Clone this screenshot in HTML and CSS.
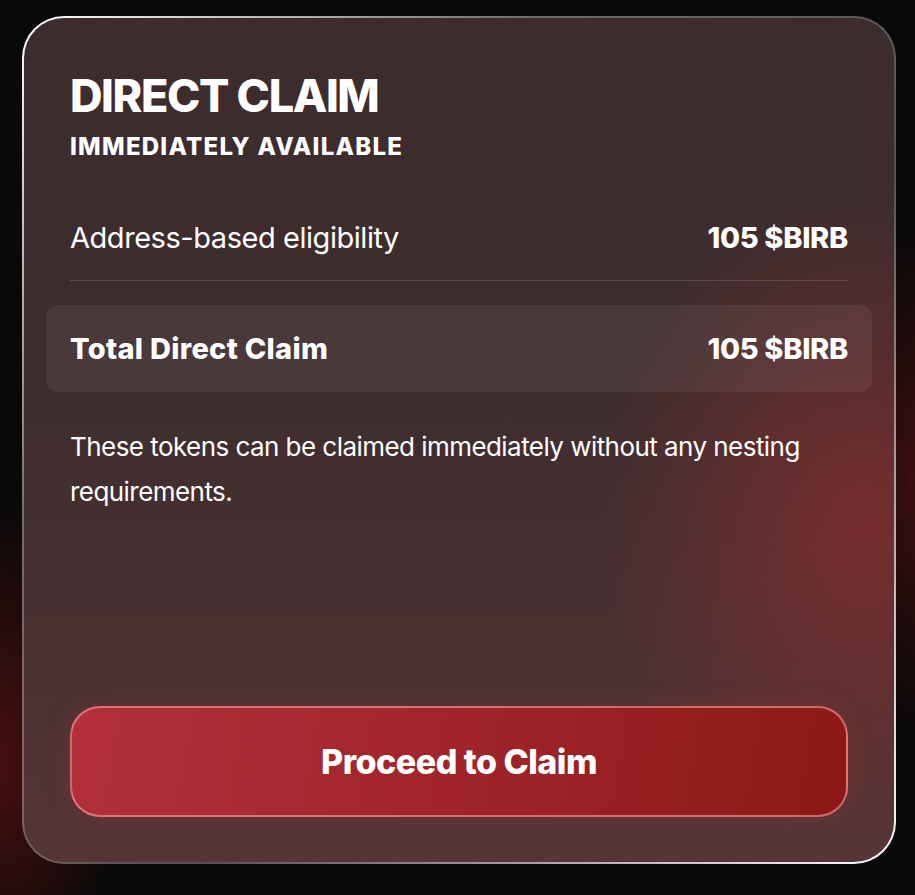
FILE: index.html
```html
<!DOCTYPE html>
<html>
<head>
<meta charset="utf-8">
<link rel="stylesheet" href="styles.css">
</head>
<body>
<div class="card">
  <h1 class="title">DIRECT CLAIM</h1>
  <div class="subtitle">IMMEDIATELY AVAILABLE</div>
  <div class="row">
    <span class="label">Address-based eligibility</span>
    <span class="value">105 $BIRB</span>
  </div>
  <div class="total">
    <span class="total-label">Total Direct Claim</span>
    <span class="value">105 $BIRB</span>
  </div>
  <p class="note">These tokens can be claimed immediately without any nesting requirements.</p>
  <button class="cta">Proceed to Claim</button>
</div>
</body>
</html>
```
FILE: styles.css
```css
html, body {
  margin: 0;
  height: 100%;
}
body {
  background:
    radial-gradient(ellipse 120px 260px at 0px 760px, rgba(120, 20, 20, 0.55), rgba(120, 20, 20, 0) 100%),
    radial-gradient(ellipse 60px 260px at 915px 480px, rgba(110, 20, 20, 0.5), rgba(110, 20, 20, 0) 100%),
    #0a0909;
  padding: 16px 19px 0 22px;
  box-sizing: border-box;
  font-family: Inter, "Liberation Sans", sans-serif;
  color: #fff;
}
.card {
  box-sizing: border-box;
  height: 848px;
  border-radius: 42px;
  border: 2px solid transparent;
  background:
    radial-gradient(ellipse 260px 330px at 840px 510px, rgba(140, 45, 45, 0.7), rgba(140, 45, 45, 0) 100%) padding-box,
    linear-gradient(180deg, #3d2c2d 0%, #3f2d2e 45%, #4c3233 80%, #553536 100%) padding-box,
    linear-gradient(135deg, #ffffff 0%, rgba(255, 255, 255, 0.4) 30%, rgba(255, 255, 255, 0.3) 60%, #ffffff 100%) border-box;
  padding: 51px 46px 45px 46px;
  display: flex;
  flex-direction: column;
}
.title {
  margin: 0;
  font-size: 45px;
  font-weight: 800;
  line-height: 54px;
  letter-spacing: -1.4px;
}
.subtitle {
  font-size: 24px;
  font-weight: 800;
  line-height: 30px;
  margin-top: 9px;
  letter-spacing: 1.25px;
}
.row {
  display: flex;
  justify-content: space-between;
  align-items: center;
  margin-top: 58px;
  padding-bottom: 24px;
  border-bottom: 1px solid rgba(255, 255, 255, 0.14);
}
.label {
  font-size: 29px;
  line-height: 36px;
  letter-spacing: -0.45px;
}
.value {
  font-size: 29px;
  font-weight: 800;
  line-height: 36px;
  letter-spacing: -0.3px;
}
.total {
  display: flex;
  justify-content: space-between;
  align-items: center;
  margin: 24px -24px 0 -24px;
  padding: 0 24px;
  height: 87px;
  border-radius: 12px;
  background: rgba(255, 255, 255, 0.06);
}
.total-label {
  font-size: 29px;
  font-weight: 800;
  line-height: 36px;
  letter-spacing: 0.3px;
}
.note {
  margin: 32px 0 0 0;
  font-size: 26px;
  line-height: 45px;
  letter-spacing: -0.55px;
}
.cta {
  margin-top: auto;
  height: 111px;
  border-radius: 30px;
  border: 2px solid rgba(255, 175, 175, 0.55);
  background: linear-gradient(100deg, #b3303b 0%, #a0242a 50%, #8c1915 100%);
  box-shadow: 0 0 24px rgba(180, 60, 60, 0.25);
  color: #fff;
  font-family: Inter, "Liberation Sans", sans-serif;
  font-size: 34px;
  font-weight: 800;
  letter-spacing: -0.5px;
  cursor: pointer;
}
```
